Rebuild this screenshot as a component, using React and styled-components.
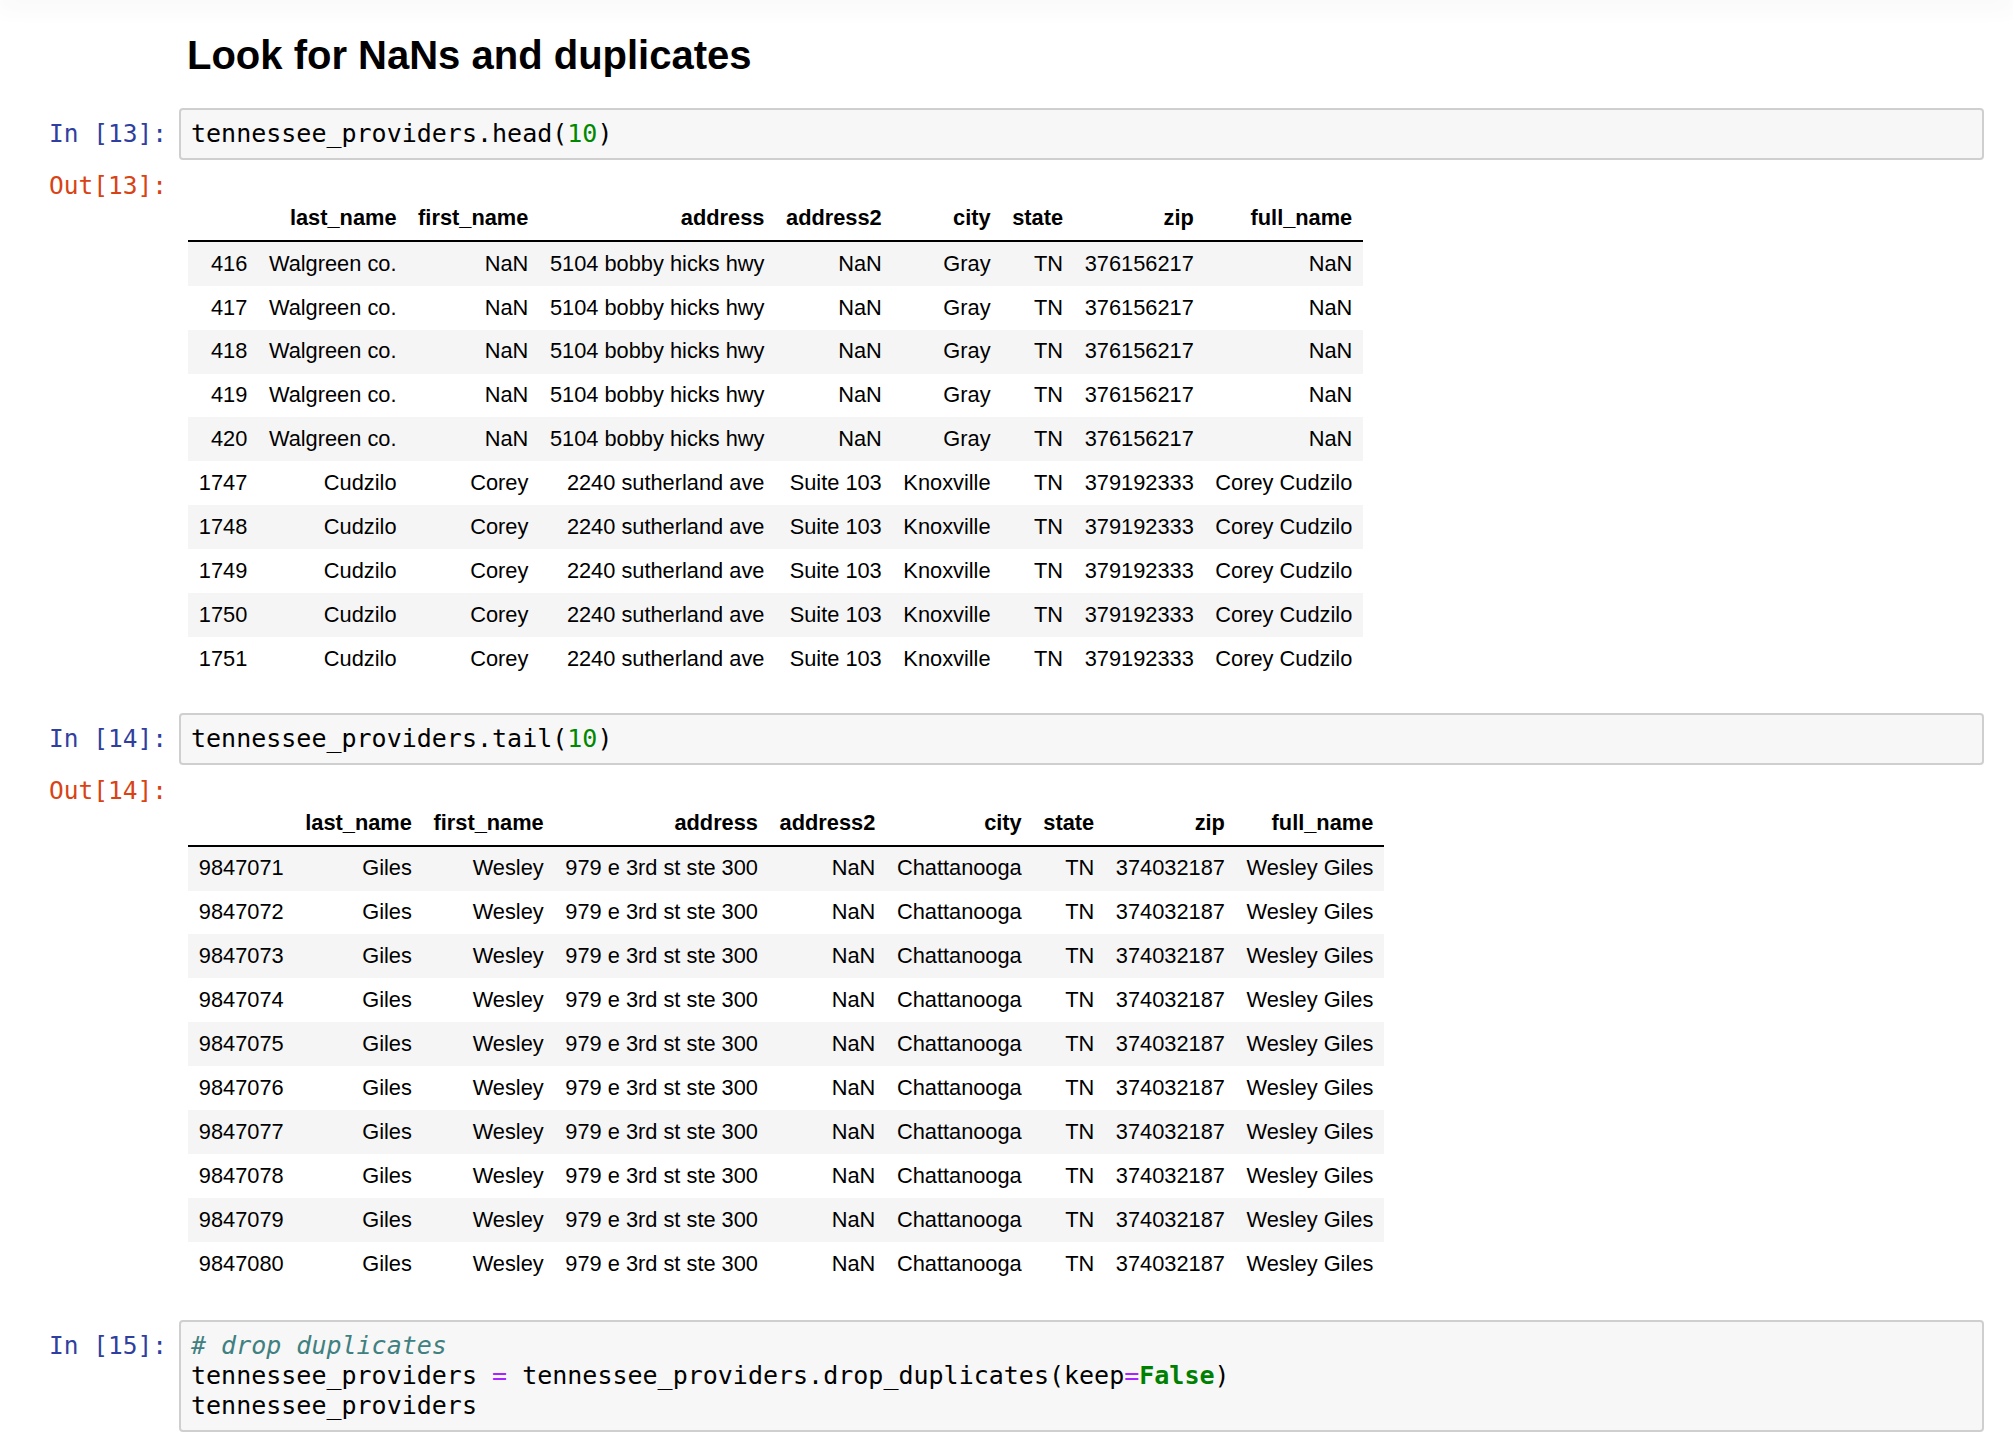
import React from 'react';
import styled, { createGlobalStyle } from 'styled-components';

const GlobalStyle = createGlobalStyle`
  html, body {
    margin: 0;
    padding: 0;
    background: #ffffff;
    overflow: hidden;
  }
  body {
    font-family: "Liberation Sans", Arial, sans-serif;
    color: #000;
  }
`;

const HeaderShadow = styled.div`
  height: 0;
  box-shadow: 0 0 22px 2px rgba(87, 87, 87, 0.2);
`;

const Notebook = styled.main`
  display: flex;
  flex-direction: column;
  padding: 31px 29px 0 0;
`;

const Cell = styled.section`
  display: flex;
  flex-direction: column;
  margin-top: ${(p) => p.$gap || 0}px;
`;

const Row = styled.div`
  display: flex;
  align-items: flex-start;
`;

const Prompt = styled.div`
  flex: 0 0 179px;
  box-sizing: border-box;
  padding: 11px 12px 0 0;
  text-align: right;
  font-family: "DejaVu Sans Mono", "Liberation Mono", monospace;
  font-size: 24.5px;
  line-height: 29px;
  white-space: pre;
  color: ${(p) => (p.$out ? '#D84315' : '#303F9F')};
`;

const Heading = styled.h2`
  flex: 1;
  margin: 0;
  padding-left: 8px;
  font-family: "Liberation Sans", Arial, sans-serif;
  font-size: 40px;
  line-height: 48px;
  font-weight: bold;
  color: #000;
`;

const InputArea = styled.div`
  flex: 1;
  min-width: 0;
  box-sizing: border-box;
  border: 2px solid #cfcfcf;
  border-radius: 4px;
  background: #f7f7f7;
  padding: 9px 10px;
  font-family: "DejaVu Sans Mono", "Liberation Mono", monospace;
  font-size: 25px;
  line-height: 30px;
  color: #000;
  white-space: pre;
`;

const CodeLine = styled.div`
  height: 30px;
`;

const Num = styled.span`
  color: #008800;
`;

const Comment = styled.span`
  color: #408080;
  font-style: italic;
`;

const Op = styled.span`
  color: #aa22ff;
`;

const Kw = styled.span`
  color: #008000;
  font-weight: bold;
`;

const OutputSubarea = styled.div`
  flex: 1;
  min-width: 0;
  padding: 36px 0 0 9px;
`;

const Table = styled.table`
  border-collapse: collapse;
  border-spacing: 0;
  border: none;
  font-family: "Liberation Sans", Arial, sans-serif;
  font-size: 21.8px;
  line-height: 22.3px;
  color: #000;

  tbody tr:nth-child(odd) {
    background: #f5f5f5;
  }
`;

const THead = styled.thead`
  border-bottom: 2px solid #000;
`;

const Th = styled.th`
  padding: 10.8px;
  text-align: right;
  vertical-align: bottom;
  font-weight: bold;
  white-space: nowrap;
`;

const Td = styled.td`
  padding: 10.8px;
  text-align: right;
  vertical-align: middle;
  font-weight: normal;
  white-space: nowrap;
`;

const columns = ['last_name', 'first_name', 'address', 'address2', 'city', 'state', 'zip', 'full_name'];

const walgreen = ['Walgreen co.', 'NaN', '5104 bobby hicks hwy', 'NaN', 'Gray', 'TN', '376156217', 'NaN'];
const cudzilo = ['Cudzilo', 'Corey', '2240 sutherland ave', 'Suite 103', 'Knoxville', 'TN', '379192333', 'Corey Cudzilo'];
const giles = ['Giles', 'Wesley', '979 e 3rd st ste 300', 'NaN', 'Chattanooga', 'TN', '374032187', 'Wesley Giles'];

const headRows = [
  ...[416, 417, 418, 419, 420].map((i) => [String(i), ...walgreen]),
  ...[1747, 1748, 1749, 1750, 1751].map((i) => [String(i), ...cudzilo]),
];

const tailRows = Array.from({ length: 10 }, (_, k) => [String(9847071 + k), ...giles]);

function DataFrame({ rows }) {
  return (
    <Table>
      <THead>
        <tr>
          <Th />
          {columns.map((c) => (
            <Th key={c}>{c}</Th>
          ))}
        </tr>
      </THead>
      <tbody>
        {rows.map((r) => (
          <tr key={r[0]}>
            {r.map((v, j) => (
              <Td key={j}>{v}</Td>
            ))}
          </tr>
        ))}
      </tbody>
    </Table>
  );
}

export default function App() {
  return (
    <>
      <GlobalStyle />
      <HeaderShadow />
      <Notebook>
        <Row>
          <Prompt />
          <Heading>Look for NaNs and duplicates</Heading>
        </Row>

        <Cell $gap={29}>
          <Row>
            <Prompt>In [13]:</Prompt>
            <InputArea>
              <CodeLine>
                tennessee_providers.head(<Num>10</Num>)
              </CodeLine>
            </InputArea>
          </Row>
          <Row>
            <Prompt $out>Out[13]:</Prompt>
            <OutputSubarea>
              <DataFrame rows={headRows} />
            </OutputSubarea>
          </Row>
        </Cell>

        <Cell $gap={32}>
          <Row>
            <Prompt>In [14]:</Prompt>
            <InputArea>
              <CodeLine>
                tennessee_providers.tail(<Num>10</Num>)
              </CodeLine>
            </InputArea>
          </Row>
          <Row>
            <Prompt $out>Out[14]:</Prompt>
            <OutputSubarea>
              <DataFrame rows={tailRows} />
            </OutputSubarea>
          </Row>
        </Cell>

        <Cell $gap={34}>
          <Row>
            <Prompt>In [15]:</Prompt>
            <InputArea>
              <CodeLine>
                <Comment># drop duplicates</Comment>
              </CodeLine>
              <CodeLine>
                tennessee_providers <Op>=</Op> tennessee_providers.drop_duplicates(keep<Op>=</Op>
                <Kw>False</Kw>)
              </CodeLine>
              <CodeLine>tennessee_providers</CodeLine>
            </InputArea>
          </Row>
        </Cell>
      </Notebook>
    </>
  );
}
